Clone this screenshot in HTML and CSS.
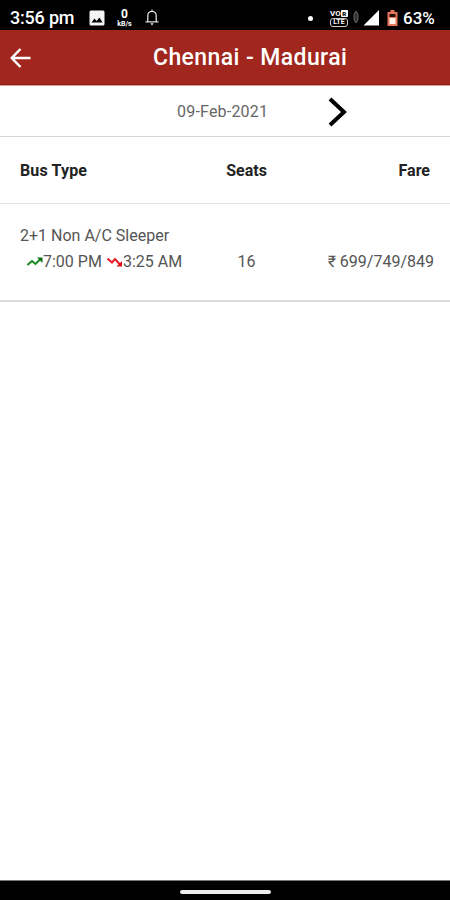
FILE: index.html
```html
<!DOCTYPE html>
<html lang="en">
<head>
    <meta charset="UTF-8">
    <meta name="viewport" content="width=device-width, initial-scale=1.0">
    <title>Chennai - Madurai</title>
    <link rel="stylesheet" href="styles.css">
</head>
<body>
    <div class="status-bar">
        <span class="clock">3:56 pm</span>
        <svg class="icon-image" width="16" height="16" viewBox="0 0 16 16">
            <rect x="0.5" y="0.5" width="15" height="15" rx="1.5" fill="#f4f4f4"/>
            <path d="M2.500 12.500l3-4 2 2.500 3-3.500 3 5z" fill="#000"/>
        </svg>
        <div class="speed">
            <span class="speed-value">0</span>
            <span class="speed-unit">kB/s</span>
        </div>
        <svg class="icon-bell" width="14" height="17" viewBox="0 0 14 17">
            <path d="M2.800 12.500V6.500a4.200 4.200 0 0 1 8.400 0v6M0.500 12.800h13M7 0.500v2" fill="none" stroke="#ddd" stroke-width="1.300"/>
            <path d="M5.300 14.300h3.400L7 16.500z" fill="#ddd"/>
        </svg>

        <div class="status-right">
            <span class="dot"></span>
            <div class="volte">
                <span class="volte-top">VO<b>R</b></span>
                <span class="volte-bottom">LTE</span>
            </div>
            <svg class="icon-data" width="6" height="14" viewBox="0 0 6 14">
                <path d="M3 1L1 4.500v5L3 13l2-3.500v-5z" fill="#333" stroke="#666"/>
            </svg>
            <svg class="icon-signal" width="17" height="16" viewBox="0 0 17 16">
                <path d="M0.500 15.500L16 0v15.500z" fill="#fff"/>
            </svg>
            <svg class="icon-battery" width="11" height="16" viewBox="0 0 11 16">
                <path d="M3.500 0h4v2H10.500v14H0.500V2h3z" fill="#e5765a"/>
                <path d="M2.500 4h6v3h-6z" fill="#280c06"/>
                <path d="M2.500 8h6v6h-6z" fill="#fff0e8"/>
            </svg>
            <span class="percent">63%</span>
        </div>
    </div>

    <div class="header">
        <svg class="back" width="22" height="20" viewBox="0 0 22 20">
            <path d="M10.500 1L1.800 10l8.700 9M2 10h18.500" fill="none" stroke="#fff" stroke-width="2.500"/>
        </svg>
        <h1>Chennai - Madurai</h1>
    </div>

    <div class="date-row">
        <span class="date">09-Feb-2021</span>
        <svg class="next" width="20" height="30" viewBox="0 0 20 30">
            <path d="M2 2l14 13L2 28" fill="none" stroke="#000" stroke-width="4"/>
        </svg>
    </div>

    <div class="row table-head">
        <span class="bus">Bus Type</span>
        <span class="seats">Seats</span>
        <span class="fare">Fare</span>
    </div>

    <div class="row trip">
        <div class="bus">
            <div class="bus-name">2+1 Non A/C Sleeper</div>
            <div class="times">
                <svg width="16" height="10" viewBox="0 0 16 10">
                    <path d="M0.500 8l4.500-4 3.500 3 5-5" fill="none" stroke="#168a1e" stroke-width="2"/>
                    <path d="M10 0.500h5.500V6z" fill="#087010"/>
                </svg>
                <span class="depart">7:00 PM</span>
                <svg width="16" height="10" viewBox="0 0 16 10">
                    <path d="M0.500 1.500L5 5.500l3-3.500 5 5.500" fill="none" stroke="#e3202a" stroke-width="2"/>
                    <path d="M9.500 9.500H15V4z" fill="#e00c18"/>
                </svg>
                <span class="arrive">3:25 AM</span>
            </div>
        </div>
        <span class="seats">16</span>
        <span class="fare">₹ 699/749/849</span>
    </div>

    <div class="nav-bar"><span class="nav-handle"></span></div>
</body>
</html>
```
FILE: styles.css
```css
* {
    box-sizing: border-box;
}

body {
    margin: 0;
    height: 900px;
    display: flex;
    flex-direction: column;
    background-color: #fff;
    color: #555;
    font-family: Roboto, "Noto Sans", sans-serif;
    font-size: 16px;
    overflow: hidden;
}

svg {
    display: block;
    flex-shrink: 0;
}

/* Status bar */
.status-bar {
    height: 30px;
    padding: 6px 14px 0 10px;
    display: flex;
    align-items: center;
    background-color: #000;
    color: #fff;
    flex-shrink: 0;
}

.clock {
    width: 79px;
    font-size: 18px;
    font-weight: 500;
    letter-spacing: -0.2px;
    line-height: 24px;
    white-space: nowrap;
}

.speed {
    width: 17px;
    margin: 0 13px 0 11px;
    display: flex;
    flex-direction: column;
    align-items: center;
    font-weight: 700;
}

.speed-value {
    font-size: 12px;
    line-height: 12px;
}

.speed-unit {
    font-size: 7px;
    line-height: 8px;
}

.icon-bell {
    margin: 0 0 2px -1px;
}

.status-right {
    margin-left: auto;
    display: flex;
    align-items: center;
}

.dot {
    width: 5px;
    height: 5px;
    margin-right: 17px;
    border-radius: 50%;
    background-color: #fff;
}

.volte {
    width: 19px;
    display: flex;
    flex-direction: column;
    font-size: 8px;
    font-weight: 700;
    line-height: 8px;
}

.volte-top {
    display: flex;
}

.volte-top b {
    width: 7px;
    height: 7px;
    border-radius: 1px;
    background-color: #fff;
    color: #000;
    font-size: 6px;
    line-height: 7px;
    text-align: center;
}

.volte-bottom {
    width: 18px;
    border: 1px solid #ccc;
    border-radius: 3px;
    text-align: center;
    font-size: 7px;
    line-height: 7px;
}

.icon-data {
    margin: 0 4px 3px 4px;
}

.icon-battery {
    margin: 0 5px 0 7px;
}

.percent {
    width: 33px;
    font-size: 17px;
    font-weight: 500;
    line-height: 24px;
}

/* Title bar */
.header {
    height: 55px;
    padding: 1px 0 0 10px;
    display: flex;
    align-items: center;
    background-color: #a1261d;
    border-bottom: 1px solid #8d1c14;
    color: #fff;
    flex-shrink: 0;
}

.header h1 {
    margin: 0 0 0 121px;
    font-size: 23px;
    font-weight: 500;
    letter-spacing: 0.4px;
    white-space: nowrap;
}

/* Date selector */
.date-row {
    height: 52px;
    padding-left: 177px;
    display: flex;
    align-items: center;
    border-top: 1px solid #e2a09b;
    border-bottom: 1px solid #d9d9d9;
    color: #666;
    flex-shrink: 0;
}

.date {
    width: 151px;
    letter-spacing: 0.2px;
}

.next {
    margin-top: 2px;
}

/* Bus list */
.row {
    display: grid;
    grid-template-columns: 185px 83px 1fr;
    align-items: center;
    padding: 0 16px 0 20px;
    white-space: nowrap;
    flex-shrink: 0;
}

.seats {
    text-align: center;
}

.fare {
    text-align: right;
}

.table-head {
    height: 67px;
    padding-right: 20px;
    border-bottom: 1px solid #e2e2e2;
    color: #222;
    font-weight: 700;
}

.table-head .bus {
    letter-spacing: 0.15px;
}

.trip {
    height: 98px;
    padding-top: 19px;
    align-items: start;
    border-bottom: 2px solid #dedede;
    line-height: 26px;
}

.trip .seats,
.trip .fare {
    padding-top: 26px;
}

.times {
    display: flex;
    align-items: center;
    padding-left: 7px;
}

.depart {
    width: 64px;
}

/* Bottom navigation */
.nav-bar {
    height: 20px;
    margin-top: auto;
    display: flex;
    align-items: center;
    justify-content: center;
    background-color: #000;
    border-top: 1px solid #777;
    flex-shrink: 0;
}

.nav-handle {
    width: 91px;
    height: 4px;
    margin-top: 2px;
    border-radius: 2px;
    background-color: #eee;
}
```
